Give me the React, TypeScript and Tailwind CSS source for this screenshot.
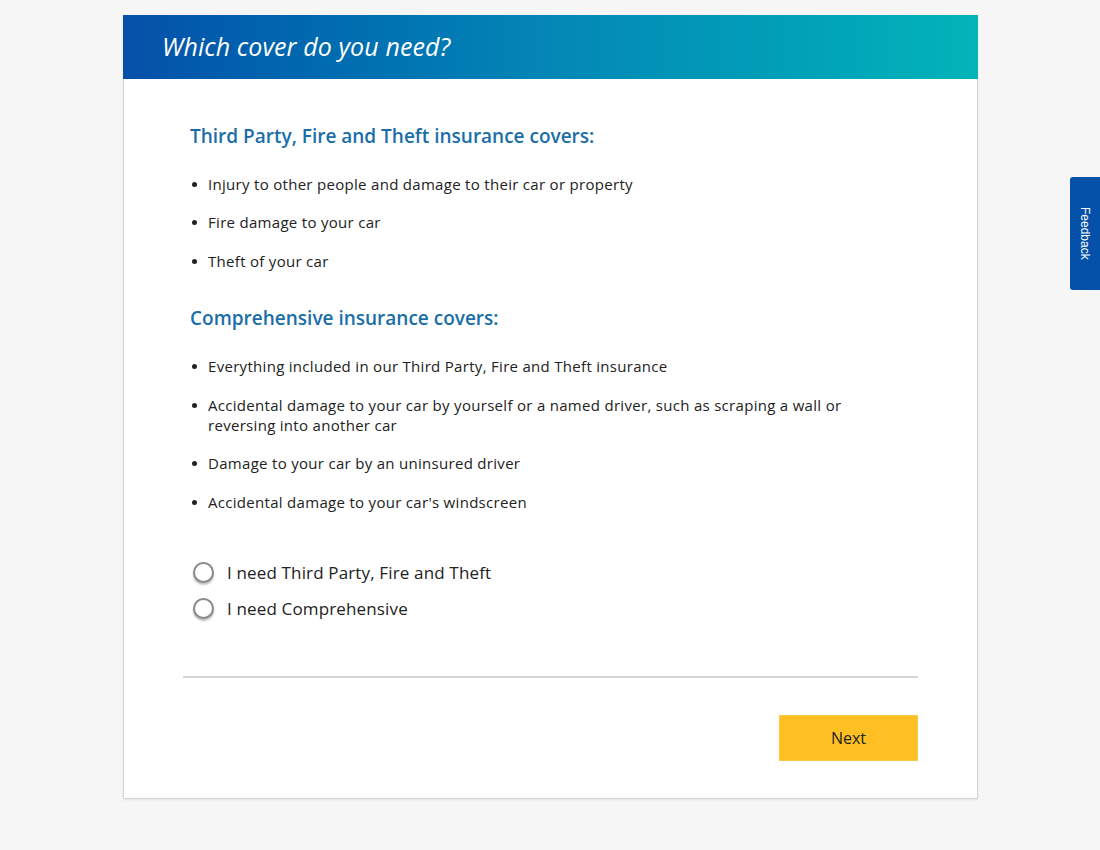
import React from "react";

const font = { fontFamily: '"Open Sans", "Noto Sans", sans-serif' };

function Bullet({ children }: { children: React.ReactNode }) {
  return (
    <li className="flex items-start">
      <span className="mt-[8px] mr-[11px] ml-[2px] h-[5px] w-[5px] shrink-0 rounded-full bg-[#222]" />
      <span>{children}</span>
    </li>
  );
}

function Radio({ label }: { label: string }) {
  return (
    <label className="flex items-center gap-[13px] text-[17px] text-[#222] tracking-[0.15px]">
      <span className="ml-[3px] h-[21px] w-[21px] rounded-full border-2 border-[#8a8a8a] bg-white shadow-[0_2px_2px_rgba(0,0,0,0.25)]" />
      <span>{label}</span>
    </label>
  );
}

export default function App() {
  return (
    <div className="min-h-[850px] w-full bg-[#f6f6f6] relative" style={font}>
      <div className="pt-[15px] pl-[123px]">
        <div className="w-[855px] bg-white shadow-[0_1px_2px_rgba(0,0,0,0.08)]">
          <div className="flex h-[64px] items-center bg-gradient-to-r from-[#0650a9] via-[#0587b6] to-[#03b4b9] pl-[39px]">
            <h1 className="text-[25px] italic font-medium text-white tracking-[0.1px]">Which cover do you need?</h1>
          </div>
          <div className="border-x border-b border-[#d4d4d4] px-[59px] pt-[43px] pb-[37px]">
            <div className="pl-[7px]">
              <h2 className="text-[19px] font-semibold text-[#1a6ea8]">Third Party, Fire and Theft insurance covers:</h2>
              <ul className="mt-[23px] flex flex-col gap-[18.5px] text-[15px] leading-[20px] tracking-[0.3px] text-[#222]">
                <Bullet>Injury to other people and damage to their car or property</Bullet>
                <Bullet>Fire damage to your car</Bullet>
                <Bullet>Theft of your car</Bullet>
              </ul>
              <h2 className="mt-[33px] text-[19px] font-semibold text-[#1a6ea8]">Comprehensive insurance covers:</h2>
              <ul className="mt-[24px] flex flex-col gap-[18.5px] text-[15px] leading-[20px] tracking-[0.3px] text-[#222]">
                <Bullet>Everything included in our Third Party, Fire and Theft insurance</Bullet>
                <Bullet>
                  Accidental damage to your car by yourself or a named driver, such as scraping a wall or
                  <br />
                  reversing into another car
                </Bullet>
                <Bullet>Damage to your car by an uninsured driver</Bullet>
                <Bullet>Accidental damage to your car's windscreen</Bullet>
              </ul>
              <div className="mt-[48px] flex flex-col gap-[11px]">
                <Radio label="I need Third Party, Fire and Theft" />
                <Radio label="I need Comprehensive" />
              </div>
            </div>
            <div className="mt-[54px] h-[2px] bg-[#d6d6d6]" />
            <div className="mt-[37px] flex justify-end">
              <button className="h-[46px] w-[139px] border border-[#f7c948] bg-[#fdbf21] text-[16px] text-[#222]">Next</button>
            </div>
          </div>
        </div>
      </div>
      <div className="absolute right-0 top-[177px] flex h-[113px] w-[30px] items-center justify-center rounded-l-[3px] bg-[#0550a8]">
        <span className="text-[12px] text-white [writing-mode:vertical-rl]" style={{ fontFamily: '"Liberation Sans", Arial, sans-serif' }}>Feedback</span>
      </div>
    </div>
  );
}
